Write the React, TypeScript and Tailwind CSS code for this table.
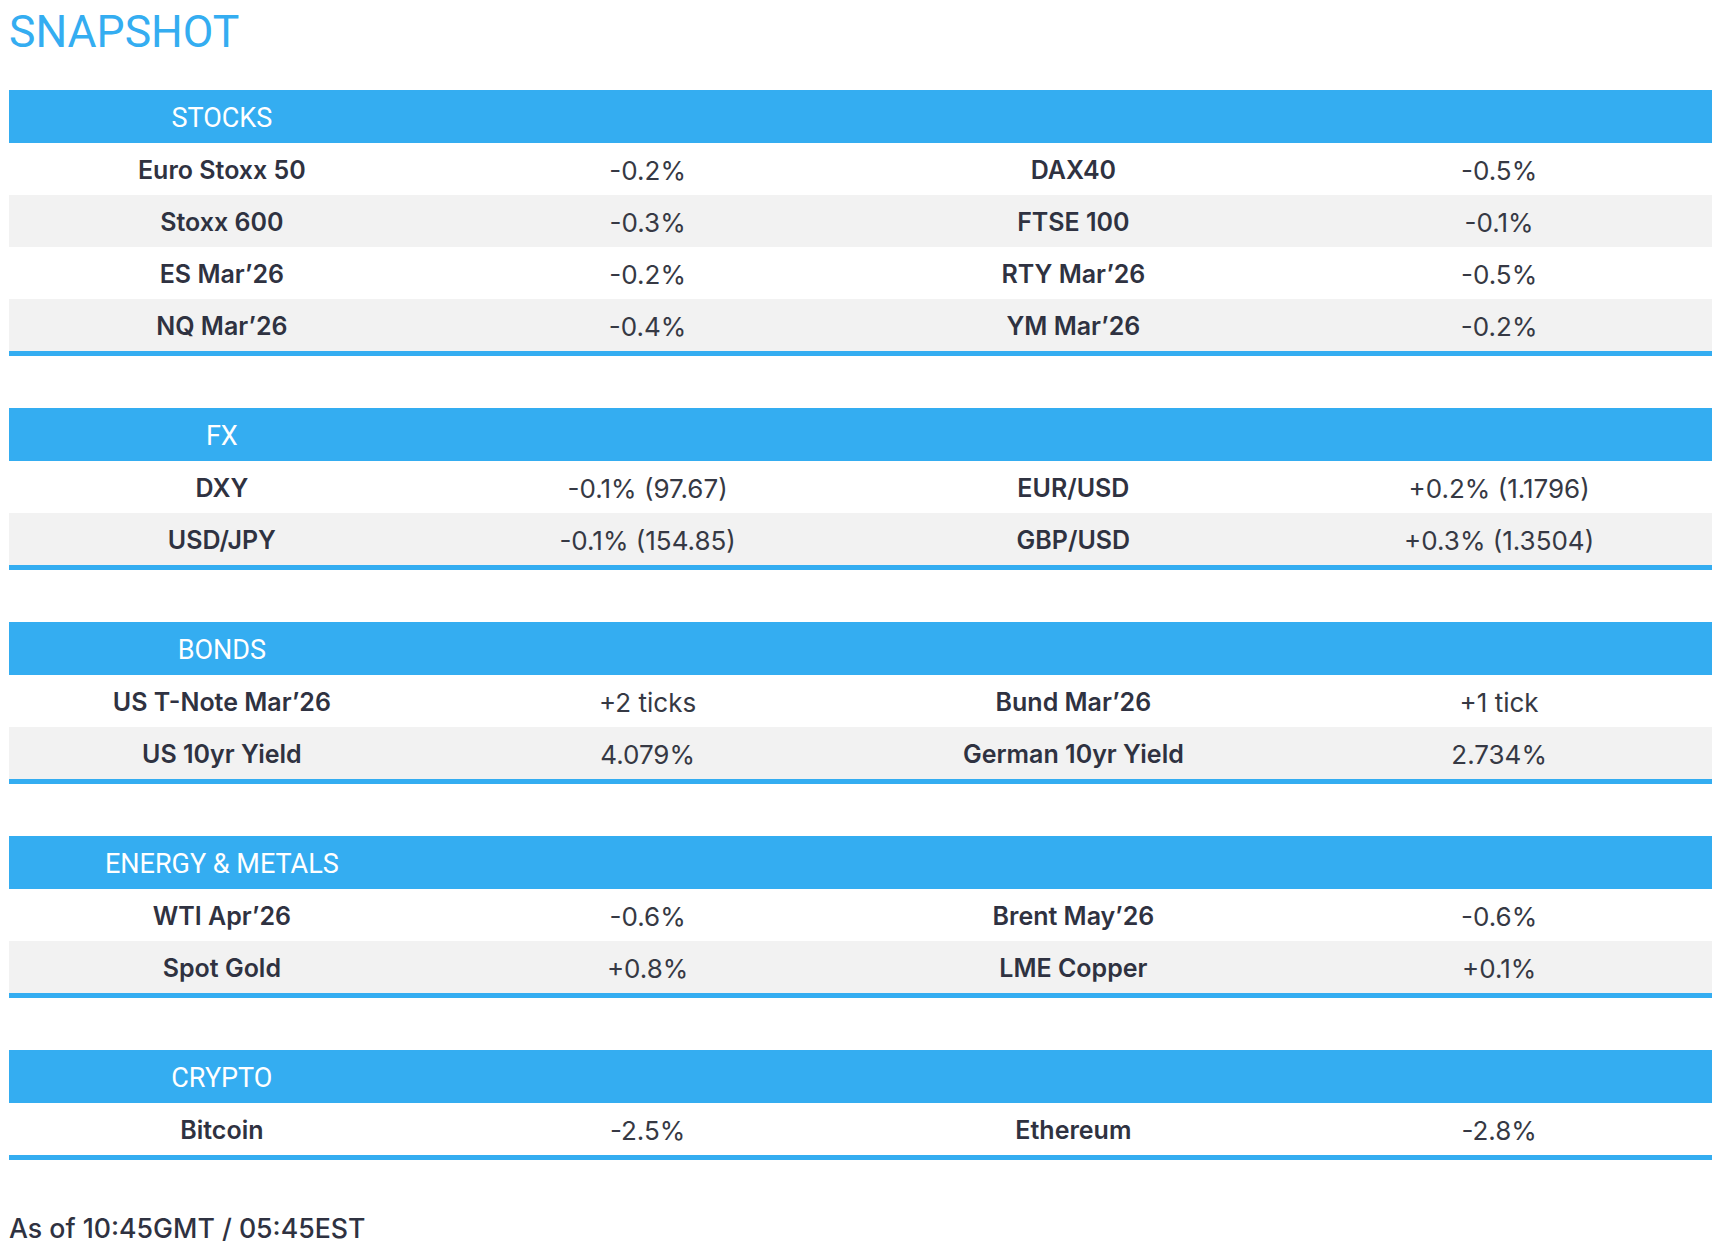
type Row = [string, string, string, string];

interface Section {
  title: string;
  rows: Row[];
}

const sections: Section[] = [
  {
    title: 'STOCKS',
    rows: [
      ['Euro Stoxx 50', '-0.2%', 'DAX40', '-0.5%'],
      ['Stoxx 600', '-0.3%', 'FTSE 100', '-0.1%'],
      ['ES Mar’26', '-0.2%', 'RTY Mar’26', '-0.5%'],
      ['NQ Mar’26', '-0.4%', 'YM Mar’26', '-0.2%'],
    ],
  },
  {
    title: 'FX',
    rows: [
      ['DXY', '-0.1% (97.67)', 'EUR/USD', '+0.2% (1.1796)'],
      ['USD/JPY', '-0.1% (154.85)', 'GBP/USD', '+0.3% (1.3504)'],
    ],
  },
  {
    title: 'BONDS',
    rows: [
      ['US T-Note Mar’26', '+2 ticks', 'Bund Mar’26', '+1 tick'],
      ['US 10yr Yield', '4.079%', 'German 10yr Yield', '2.734%'],
    ],
  },
  {
    title: 'ENERGY & METALS',
    rows: [
      ['WTI Apr’26', '-0.6%', 'Brent May’26', '-0.6%'],
      ['Spot Gold', '+0.8%', 'LME Copper', '+0.1%'],
    ],
  },
  {
    title: 'CRYPTO',
    rows: [['Bitcoin', '-2.5%', 'Ethereum', '-2.8%']],
  },
];

function SnapshotTable({ section }: { section: Section }) {
  return (
    <div className="w-[1703px] border-b-[5px] border-[#34adf1]">
      <div className="grid grid-cols-4 h-[53px] bg-[#34adf1] items-center">
        <div className="text-center text-white text-[27px] pt-[3px] font-['Roboto',sans-serif]">{section.title}</div>
      </div>
      {section.rows.map((row, i) => (
        <div
          key={i}
          className={`grid grid-cols-4 h-[52px] items-center pt-[2px] ${i % 2 === 1 ? 'bg-[#f2f2f2]' : 'bg-white'}`}
        >
          <div className="text-center text-[25px] mt-[2px] font-semibold text-[#2f3241]">{row[0]}</div>
          <div className="text-center text-[26px] text-[#363944]">{row[1]}</div>
          <div className="text-center text-[25px] mt-[2px] font-semibold text-[#2f3241]">{row[2]}</div>
          <div className="text-center text-[26px] text-[#363944]">{row[3]}</div>
        </div>
      ))}
    </div>
  );
}

export default function App() {
  return (
    <div className="min-h-screen bg-white pl-[9px] pt-[6px] pb-[20px] font-['Inter',sans-serif]">
      <h1 className="text-[44.5px] leading-[53px] text-[#34adf1] font-['Roboto',sans-serif] mb-[31px]">SNAPSHOT</h1>
      <div className="flex flex-col gap-[52px]">
        {sections.map((s) => (
          <SnapshotTable key={s.title} section={s} />
        ))}
        <p className="text-[26.7px] leading-[32px] font-medium text-[#2f3241]">As of 10:45GMT / 05:45EST</p>
      </div>
    </div>
  );
}
